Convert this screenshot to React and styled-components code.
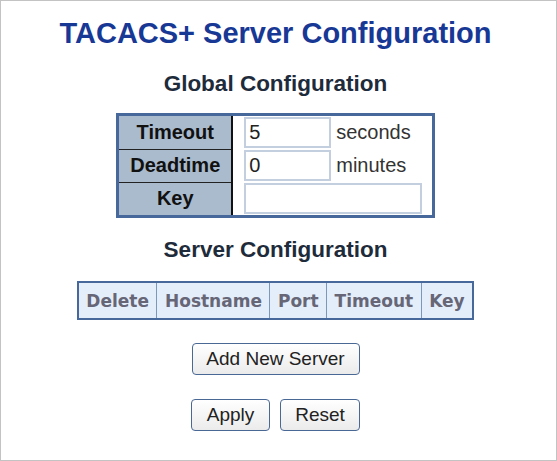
import React from "react";
import styled, { createGlobalStyle } from "styled-components";

const Global = createGlobalStyle`
  html, body { margin: 0; padding: 0; background: #fff; }
  body { font-family: "Liberation Sans", Arial, sans-serif; }
`;

const Frame = styled.div`
  box-sizing: border-box;
  width: 557px;
  height: 461px;
  border: 1px solid #c3c3c3;
  display: flex;
  flex-direction: column;
  align-items: center;
  padding-right: 6px;
`;

const Title = styled.h1`
  margin: 15px 0 0 0;
  font: bold 29px "Liberation Sans", Arial, sans-serif;
  color: #183896;
  line-height: 34px;
`;

const SubTitle = styled.h2`
  margin: ${(p) => p.$mt}px 0 0 0;
  font: bold 22.5px "Liberation Sans", Arial, sans-serif;
  color: #1e2b3a;
  line-height: 26px;
`;

const ConfigTable = styled.table`
  margin-top: ${(p) => p.$mt}px;
  border-collapse: collapse;
  border: 3px solid #46689a;
`;

const HeadCell = styled.th`
  background: #aabbcd;
  font: bold 20px "Liberation Sans", Arial, sans-serif;
  color: #111;
  width: 112px;
  height: 32px;
  padding: 0;
  text-align: center;
  border-right: 2px solid #111;
  border-bottom: 1px solid #222;
`;

const ValueCell = styled.td`
  padding: 1px 0 1px 11px;
  height: 31px;
  vertical-align: middle;
`;

const UnitCell = styled.td`
  font: 20px "Liberation Sans", Arial, sans-serif;
  color: #333;
  padding: 0 21px 0 5px;
`;

const Input = styled.input`
  box-sizing: border-box;
  width: ${(p) => p.$w}px;
  height: 31px;
  border: 2px solid #c3cfde;
  font: 20px "Liberation Sans", Arial, sans-serif;
  color: #222;
  padding: 0 3px;
  outline: none;
  display: block;
`;

const ServerTable = styled.table`
  margin-top: 18px;
  border-collapse: collapse;
  border: 2px solid #46689a;
`;

const ServerHead = styled.th`
  background: #e4eefb;
  font: bold 17px "DejaVu Sans", Verdana, sans-serif;
  color: #666677;
  padding: 0 7.5px;
  height: 35px;
  border: 1px solid #7d97bb;
  white-space: nowrap;
`;

const Button = styled.button`
  font: 19px "Liberation Sans", Arial, sans-serif;
  color: #222;
  height: 32px;
  width: ${(p) => p.$w}px;
  padding: 0;
  border: 1.5px solid #4a6894;
  border-radius: 4px;
  background: linear-gradient(#ffffff, #ebebeb);
`;

const ButtonRow = styled.div`
  margin-top: ${(p) => p.$mt}px;
  display: flex;
  gap: 10px;
`;

export default function App() {
  return (
    <>
      <Global />
      <Frame>
        <Title>TACACS+ Server Configuration</Title>
        <SubTitle $mt={21}>Global Configuration</SubTitle>
        <ConfigTable $mt={16}>
          <tbody>
            <tr>
              <HeadCell>Timeout</HeadCell>
              <ValueCell><Input $w={87} defaultValue="5" /></ValueCell>
              <UnitCell>seconds</UnitCell>
            </tr>
            <tr>
              <HeadCell>Deadtime</HeadCell>
              <ValueCell><Input $w={87} defaultValue="0" /></ValueCell>
              <UnitCell>minutes</UnitCell>
            </tr>
            <tr>
              <HeadCell>Key</HeadCell>
              <ValueCell colSpan={2}><Input $w={178} defaultValue="" /></ValueCell>
            </tr>
          </tbody>
        </ConfigTable>
        <SubTitle $mt={19}>Server Configuration</SubTitle>
        <ServerTable>
          <thead>
            <tr>
              <ServerHead>Delete</ServerHead>
              <ServerHead>Hostname</ServerHead>
              <ServerHead>Port</ServerHead>
              <ServerHead>Timeout</ServerHead>
              <ServerHead>Key</ServerHead>
            </tr>
          </thead>
        </ServerTable>
        <ButtonRow $mt={23}>
          <Button $w={168}>Add New Server</Button>
        </ButtonRow>
        <ButtonRow $mt={24}>
          <Button $w={79}>Apply</Button>
          <Button $w={80}>Reset</Button>
        </ButtonRow>
      </Frame>
    </>
  );
}
